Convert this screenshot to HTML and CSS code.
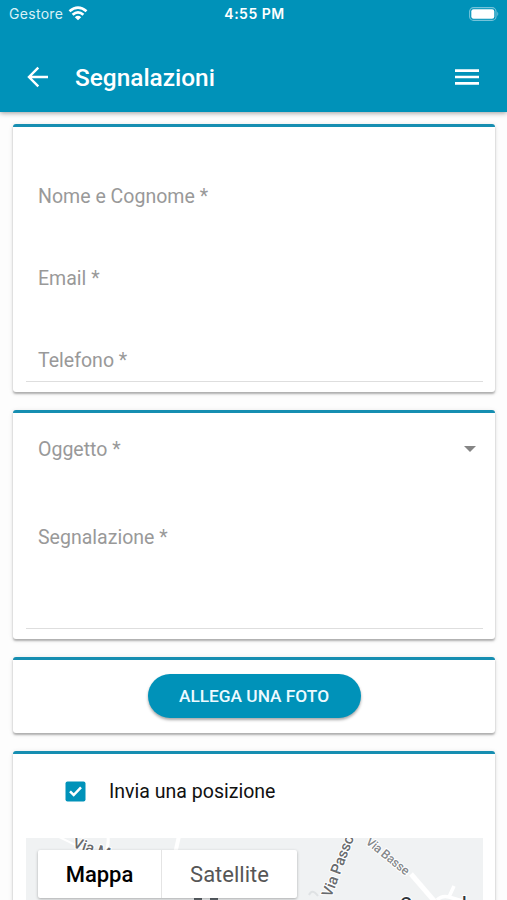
FILE: index.html
```html
<!DOCTYPE html>
<html lang="it">
<head>
<meta charset="utf-8">
<title>Segnalazioni</title>
<link rel="stylesheet" href="styles.css">
</head>
<body>
<header class="header">
  <div class="status">
    <div class="carrier"><span>Gestore</span>
      <svg width="20" height="15" viewBox="0 0 20 15" fill="none" stroke="#fff" stroke-width="2.7"><path d="M1.5 5.2Q10 -2 18.5 5.2M4.6 8.7Q10 4 15.4 8.7"/><path d="M6.8 11.2Q10 8.5 13.2 11.2L10 14.2Z" fill="#fff" stroke="none"/></svg>
    </div>
    <span class="clock">4:55 PM</span>
    <svg class="battery" width="31" height="14" viewBox="0 0 31 14"><rect x=".6" y=".6" width="26.4" height="12.8" rx="4" fill="none" stroke="#75c3da" stroke-width="1.1"/><rect x="2.3" y="2.2" width="23" height="9.6" rx="2.2" fill="#fff"/><path d="M28.3 4.8Q30.2 7 28.3 9.2Z" fill="#75c3da"/></svg>
  </div>
  <div class="toolbar">
    <svg class="back" width="22" height="22" viewBox="0 0 22 22" fill="none" stroke="#fff" stroke-width="2.4"><path d="M21 11H2.5M11.3 1.7L2 11L11.3 20.3"/></svg>
    <h1>Segnalazioni</h1>
    <svg class="menu" width="24" height="18" viewBox="0 0 24 18" fill="#fff"><path d="M0 1.3h24v2.6H0zM0 7.7h24v2.6H0zM0 14.1h24v2.6H0z"/></svg>
  </div>
</header>
<main>
  <section class="card contact">
    <div class="field"><span>Nome e Cognome *</span></div>
    <div class="field"><span>Email *</span></div>
    <div class="field lined"><span>Telefono *</span></div>
  </section>
  <section class="card report">
    <div class="select"><span>Oggetto *</span>
      <svg width="12" height="6" viewBox="0 0 12 6"><path d="M0 0h12L6 6z" fill="#858585"/></svg>
    </div>
    <div class="message"><span>Segnalazione *</span></div>
  </section>
  <section class="card photo"><button>ALLEGA UNA FOTO</button></section>
  <section class="card location">
    <label class="check">
      <svg width="21" height="21" viewBox="0 0 21 21"><rect x=".5" y=".5" width="20" height="20" rx="2" fill="#0092b9"/><path d="M5 10.3L8.7 14L16 6.3" fill="none" stroke="#fff" stroke-width="2.5"/></svg>
      <span>Invia una posizione</span>
    </label>
    <div class="map">
      <svg class="streets" width="456" height="80" viewBox="0 0 456 80">
        <g fill="none" stroke="#fff">
          <path d="M31 -2L70 17" stroke-width="2"/><path d="M82 -2Q83 8 79 16" stroke-width="3"/><path d="M153 -2L149 16" stroke-width="4"/>
          <path d="M385 36L410 65" stroke-width="5"/><path d="M411 62Q416 57 423 59L428 48M423 59L440 64" stroke-width="3.5"/>
          <path d="M283 57Q286 50 292 58" stroke="#dfe2e4" stroke-width="2"/>
        </g>
        <g class="road">
          <text x="46" y="9" transform="rotate(18 46 9)">Via M</text>
          <text x="305" y="60" transform="rotate(-69 305 60)" textLength="65">Via Passo</text>
          <text class="small" x="339" y="5" transform="rotate(39 339 5)" textLength="52">Via Basse</text>
          <text class="town" x="374 436" y="72">Cl</text>
        </g>
        <path d="M168 61h8M184 61h8" stroke="#60666c" stroke-width="2"/>
      </svg>
      <div class="switch"><span class="on">Mappa</span><span class="off">Satellite</span></div>
    </div>
  </section>
</main>
</body>
</html>
```
FILE: styles.css
```css
* { box-sizing: border-box; }
body {
  margin: 0;
  height: 900px;
  overflow: hidden;
  background: #fdfdfd;
  font-family: Roboto, "Liberation Sans", sans-serif;
}
svg { display: block; flex: none; }
.header {
  height: 112px;
  background: #0092b9;
  color: #fff;
  box-shadow: 0 1px 5px rgba(0, 0, 0, .4);
}
.status {
  display: grid;
  grid-template-columns: 1fr auto 1fr;
  align-items: center;
  height: 27px;
  padding: 0 7px 0 9px;
  font-family: Inter, sans-serif;
}
.carrier {
  display: flex;
  align-items: center;
  gap: 5px;
  font-size: 14px;
  letter-spacing: .3px;
  color: #d8f1f7;
}
.clock { font-size: 14px; font-weight: 600; letter-spacing: .5px; }
.battery { justify-self: end; }
.toolbar {
  display: flex;
  align-items: center;
  height: 84px;
  padding: 16px 28px 0 27px;
}
h1 {
  flex: 1;
  margin: 2px 0 0 26px;
  font-size: 24.4px;
  line-height: 30px;
  font-weight: 500;
}
main {
  display: flex;
  flex-direction: column;
  gap: 18px;
  height: 788px;
  overflow: hidden;
  padding: 12px 12px 0 13px;
}
.card {
  flex: none;
  border-top: 3px solid #168eb1;
  border-radius: 3px;
  background: #fff;
  box-shadow: 0 2px 2px rgba(0, 0, 0, .26), 0 1px 5px rgba(0, 0, 0, .12);
  font-size: 19.55px;
  line-height: 24px;
  color: #999;
}
.header { position: relative; }
.contact { height: 268px; padding: 12px 12px 0 13px; }
.field { height: 82px; padding: 46px 12px 0; }
.lined { height: 79px; border-bottom: 1px solid #dedede; }
.report { height: 229px; padding: 24px 12px 0 13px; }
.select {
  display: flex;
  justify-content: space-between;
  align-items: center;
  height: 24px;
  padding: 0 7px 0 12px;
}
.select span, .check span { padding-top: 2px; }
.message {
  height: 168px;
  padding: 65px 12px 0;
  border-bottom: 1px solid #dedede;
}
.photo { height: 76px; padding-top: 14px; text-align: center; }
button {
  display: inline-block;
  width: 213px;
  height: 44px;
  padding: 0 0 1px;
  border: 0;
  border-radius: 22px;
  background: #0092b9;
  box-shadow: 0 2px 3px rgba(0, 0, 0, .35);
  color: #edfaff;
  font: 500 17.3px/42px Roboto, sans-serif;
}
.location { height: 170px; padding: 25px 12px 0 13px; }
.check {
  display: flex;
  align-items: center;
  gap: 23px;
  height: 24px;
  padding-left: 39px;
  color: #111;
}
.map {
  height: 80px;
  margin-top: 35px;
  padding: 12px 0 0 12px;
  position: relative;
  overflow: hidden;
  background: #f0f2f3;
}
.streets { position: absolute; inset: 0 auto auto 0; }
.road {
  fill: #686b6e;
  stroke: #fff;
  stroke-width: 2px;
  paint-order: stroke;
  font-size: 15px;
  font-weight: 500;
}
.small { font-size: 12.5px; fill: #85888b; }
.town { font-size: 18px; fill: #30353a; }
.switch {
  display: flex;
  position: relative;
  width: 259px;
  height: 48px;
  border-radius: 2px;
  background: #fff;
  box-shadow: 0 1px 3px rgba(0, 0, 0, .3);
  font-size: 22px;
  line-height: 49px;
  text-align: center;
}
.on { width: 124px; border-right: 1px solid #e4e4e4; color: #000; font-weight: 500; }
.off { flex: 1; color: #565656; }
```
